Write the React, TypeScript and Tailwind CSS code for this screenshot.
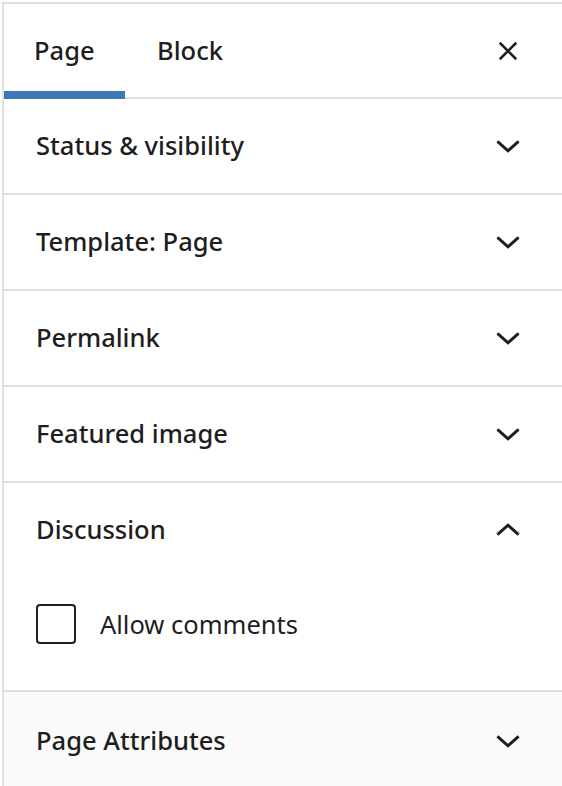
import { useState } from 'react';

const sections = [
  { id: 'status', title: 'Status & visibility' },
  { id: 'template', title: 'Template: Page' },
  { id: 'permalink', title: 'Permalink' },
  { id: 'featured', title: 'Featured image' },
];

function Chevron({ up = false }: { up?: boolean }) {
  return (
    <svg width="48" height="48" viewBox="0 0 24 24" className="shrink-0">
      <path
        d={up ? 'M6.7 14.3 12 9.6l5.3 4.7' : 'M6.7 9.7 12 14.4l5.3-4.7'}
        fill="none"
        stroke="#1e1e1e"
        strokeWidth="1.5"
      />
    </svg>
  );
}

function PanelRow({ title, open = false, muted = false }: { title: string; open?: boolean; muted?: boolean }) {
  return (
    <div className={`h-[94px] flex items-center justify-between pl-[32px] pr-[30px] ${muted ? 'bg-[#fafafa]' : ''}`}>
      <span className="text-[25.5px] font-medium text-[#1e1e1e] leading-none">{title}</span>
      <Chevron up={open} />
    </div>
  );
}

export default function App() {
  const [allow, setAllow] = useState(false);

  return (
    <div className="w-[562px] h-[786px] bg-white pl-[2px] pt-[2px] overflow-hidden" style={{ fontFamily: '"Noto Sans", sans-serif' }}>
      <div className="h-full border-l-2 border-t-2 border-[#e0e0e0]">
        {/* Tabs */}
        <div className="h-[95px] flex items-stretch border-b-2 border-[#e0e0e0] relative">
          <div className="w-[121px] flex items-center pl-[30px] relative">
            <span className="text-[25.5px] font-medium text-[#1e1e1e]">Page</span>
            <div className="absolute left-0 right-0 bottom-[-2px] h-[8px] bg-[#3f78b9]" />
          </div>
          <div className="flex items-center pl-[32px]">
            <span className="text-[25.5px] font-medium text-[#1e1e1e]">Block</span>
          </div>
          <div className="ml-auto flex items-center pr-[43px]">
            <svg width="22" height="22" viewBox="0 0 24 24">
              <path d="M3 3l18 18M21 3 3 21" stroke="#1e1e1e" strokeWidth="2.8" fill="none" />
            </svg>
          </div>
        </div>

        {sections.map((s) => (
          <div key={s.id} className="border-b-2 border-[#e0e0e0]">
            <PanelRow title={s.title} />
          </div>
        ))}

        {/* Discussion */}
        <div className="border-b-2 border-[#e0e0e0]">
          <PanelRow title="Discussion" open />
          <div className="h-[113px] pl-[32px] pt-[27px]">
            <label className="flex items-center gap-[24px] cursor-pointer">
              <input
                type="checkbox"
                checked={allow}
                onChange={() => setAllow(!allow)}
                className="appearance-none w-[40px] h-[40px] border-2 border-[#1e1e1e] rounded-[4px] bg-white"
              />
              <span className="text-[25.5px] text-[#1e1e1e]">Allow comments</span>
            </label>
          </div>
        </div>

        <div className="pt-[2px] bg-[#fafafa] h-full">
          <PanelRow title="Page Attributes" muted />
        </div>
      </div>
    </div>
  );
}
